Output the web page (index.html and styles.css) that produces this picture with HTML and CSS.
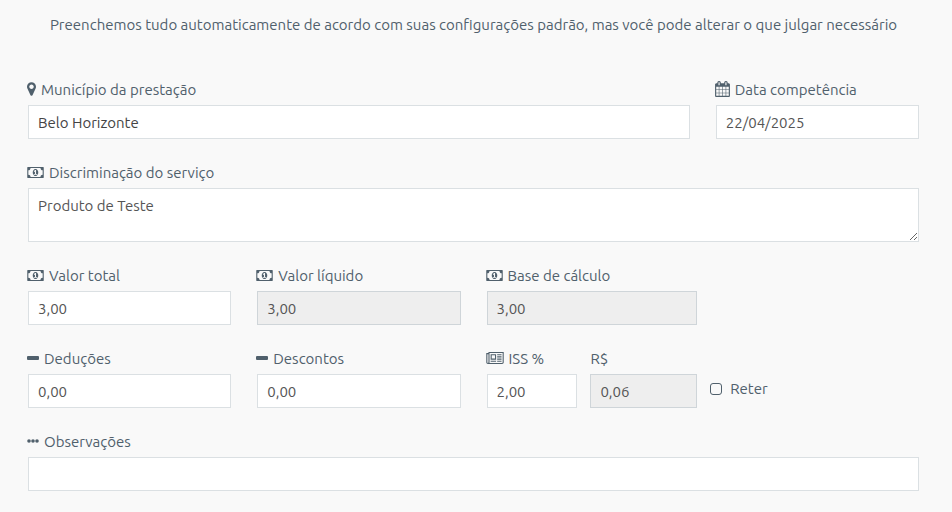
FILE: index.html
```html
<!DOCTYPE html>
<html lang="pt-BR">
<head>
    <meta charset="utf-8">
    <meta name="viewport" content="width=device-width, initial-scale=1">
    <title>Nota de serviço</title>
    <link rel="stylesheet" href="styles.css">
</head>
<body>
<!-- shared icons -->
<svg class="sprite" aria-hidden="true">
    <symbol id="money" viewBox="0 128 1920 1280">
        <path d="M768 1024h384v-96h-128v-448h-114l-148 137 77 80q42-37 55-57h2v288h-128v96zm512-256q0 70-21 142t-59.5 134-101.5 101-138 39-138-39-101.5-101-59.5-134-21-142 21-142 59.5-134 101.5-101 138-39 138 39 101.5 101 59.5 134 21 142zm512 256v-512q-106 0-181-75t-75-181h-1152q0 106-75 181t-181 75v512q106 0 181 75t75 181h1152q0-106 75-181t181-75zm128-832v1152q0 26-19 45t-45 19h-1792q-26 0-45-19t-19-45v-1152q0-26 19-45t45-19h1792q26 0 45 19t19 45z"/>
    </symbol>
    <symbol id="minus" viewBox="0 0 12 14">
        <rect x="0" y="5" width="12" height="4" rx="1"/>
    </symbol>
</svg>

<form class="form">
    <p class="intro">Preenchemos tudo automaticamente de acordo com suas configurações padrão, mas você pode alterar o que julgar necessário</p>

    <div class="field wide">
        <label for="municipio">
            <svg class="icon icon-marker" viewBox="0 0 1024 1536"><path d="M768 512q0-106-75-181t-181-75-181 75-75 181 75 181 181 75 181-75 75-181zm256 0q0 109-33 179l-364 774q-16 33-47.5 52t-67.5 19-67.5-19-46.5-52l-365-774q-33-70-33-179 0-212 150-362t362-150 362 150 150 362z"/></svg>
            Município da prestação
        </label>
        <input id="municipio" class="control city" type="text" value="Belo Horizonte">
    </div>
    <div class="field">
        <label for="data">
            <svg class="icon icon-calendar" viewBox="0 0 1664 1792"><path d="M128 1664h288v-288h-288v288zm352 0h320v-288h-320v288zm-352-352h288v-320h-288v320zm352 0h320v-320h-320v320zm-352-384h288v-288h-288v288zm736 736h320v-288h-320v288zm-384-736h320v-288h-320v288zm768 736h288v-288h-288v288zm-384-352h320v-320h-320v320zm-352-864v-288q0-13-9.5-22.5t-22.5-9.5h-64q-13 0-22.5 9.5t-9.5 22.5v288q0 13 9.5 22.5t22.5 9.5h64q13 0 22.5-9.5t9.5-22.5zm736 864h288v-320h-288v320zm-384-384h320v-288h-320v288zm384 0h288v-288h-288v288zm32-480v-288q0-13-9.5-22.5t-22.5-9.5h-64q-13 0-22.5 9.5t-9.5 22.5v288q0 13 9.5 22.5t22.5 9.5h64q13 0 22.5-9.5t9.5-22.5zm384-64v1280q0 52-38 90t-90 38h-1408q-52 0-90-38t-38-90v-1280q0-52 38-90t90-38h128v-96q0-66 47-113t113-47h64q66 0 113 47t47 113v96h384v-96q0-66 47-113t113-47h64q66 0 113 47t47 113v96h128q52 0 90 38t38 90z"/></svg>
            Data competência
        </label>
        <input id="data" class="control" type="text" value="22/04/2025">
    </div>

    <div class="field full">
        <label for="discriminacao">
            <svg class="icon icon-money"><use href="#money"/></svg>
            Discriminação do serviço
        </label>
        <textarea id="discriminacao" class="control area">Produto de Teste</textarea>
    </div>

    <div class="field">
        <label for="total">
            <svg class="icon icon-money"><use href="#money"/></svg>
            Valor total
        </label>
        <input id="total" class="control" type="text" value="3,00">
    </div>
    <div class="field">
        <label for="liquido">
            <svg class="icon icon-money"><use href="#money"/></svg>
            Valor líquido
        </label>
        <input id="liquido" class="control" type="text" value="3,00" disabled>
    </div>
    <div class="half">
        <div class="field base">
            <label for="base">
                <svg class="icon icon-money"><use href="#money"/></svg>
                Base de cálculo
            </label>
            <input id="base" class="control" type="text" value="3,00" disabled>
        </div>
    </div>

    <div class="field">
        <label for="deducoes">
            <svg class="icon icon-small"><use href="#minus"/></svg>
            Deduções
        </label>
        <input id="deducoes" class="control" type="text" value="0,00">
    </div>
    <div class="field">
        <label for="descontos">
            <svg class="icon icon-small"><use href="#minus"/></svg>
            Descontos
        </label>
        <input id="descontos" class="control" type="text" value="0,00">
    </div>
    <div class="half">
        <div class="field">
            <label for="iss">
                <svg class="icon icon-news" viewBox="0 0 2048 1408"><path d="M1024 384h-384v384h384v-384zm128 640v128h-640v-128h640zm0-768v640h-640v-640h640zm640 768v128h-512v-128h512zm0-256v128h-512v-128h512zm0-256v128h-512v-128h512zm0-256v128h-512v-128h512zm-1536 960v-960h-128v960q0 26 19 45t45 19 45-19 19-45zm1664 0v-1088h-1536v1088q0 33-11 64h1483q26 0 45-19t19-45zm128-1216v1216q0 80-56 136t-136 56h-1664q-80 0-136-56t-56-136v-1088h256v-128h1792z"/></svg>
                ISS %
            </label>
            <input id="iss" class="control" type="text" value="2,00">
        </div>
        <div class="field">
            <label for="valor-iss">R$</label>
            <input id="valor-iss" class="control" type="text" value="0,06" disabled>
        </div>
        <div class="check">
            <input id="reter" type="checkbox">
            <label for="reter">Reter</label>
        </div>
    </div>

    <div class="field full">
        <label for="observacoes">
            <svg class="icon icon-small" viewBox="0 0 12 14"><circle cx="2" cy="7" r="1.8"/><circle cx="6" cy="7" r="1.8"/><circle cx="10" cy="7" r="1.8"/></svg>
            Observações
        </label>
        <input id="observacoes" class="control" type="text">
    </div>
</form>
</body>
</html>
```

FILE: styles.css
```css
body {
    margin: 0;
    background: #f9f9f9;
    color: #50606c;
    font-family: 'Ubuntu', 'Noto Sans', sans-serif;
    font-size: 15px;
    line-height: 22px;
}

.sprite {
    display: none;
}

.form {
    display: grid;
    grid-template-columns: repeat(12, minmax(0, 1fr));
    gap: 22px 26px;
    padding: 14px 33px 21px 28px;
}

.intro {
    grid-column: 1 / -1;
    margin: 0 0 20px;
    text-align: center;
}

.field {
    grid-column: span 3;
    min-width: 0;
}

.wide {
    grid-column: span 9;
}

.full {
    grid-column: 1 / -1;
}

.half {
    grid-column: span 6;
    display: grid;
    grid-template-columns: 91fr 107fr 209fr;
    gap: 13px;
}

.half .field {
    grid-column: auto;
}

.half .base {
    grid-column: span 2;
}

.field label {
    display: flex;
    align-items: center;
    gap: 5px;
    margin-bottom: 4px;
    padding-top: 1px;
    white-space: nowrap;
}

.icon {
    flex: none;
    margin: 0 0 2px -1px;
    fill: currentColor;
}

.icon-marker {
    width: 9px;
    height: 14px;
}

.icon-calendar {
    width: 15px;
    height: 16px;
}

.icon-money {
    width: 17px;
    height: 11px;
}

.icon-small {
    width: 12px;
    height: 14px;
}

.icon-news {
    width: 18px;
    height: 12px;
}

.control {
    display: block;
    box-sizing: border-box;
    width: 100%;
    height: 34px;
    margin: 0;
    padding: 5px 9px;
    border: 1px solid #dbe0e3;
    border-radius: 0;
    background: #fff;
    color: #555;
    font: inherit;
}

.control:disabled {
    border-color: #cfd5d9;
    background: #eee;
}

.city {
    color: #444;
}

.area {
    height: 54px;
    padding-top: 6px;
    resize: vertical;
}

.check {
    display: flex;
    align-items: center;
    gap: 8px;
    padding-top: 22px;
}

.check input {
    appearance: none;
    width: 12px;
    height: 12px;
    margin: 0;
    border: 1px solid #50606c;
    border-radius: 3px;
}
```
